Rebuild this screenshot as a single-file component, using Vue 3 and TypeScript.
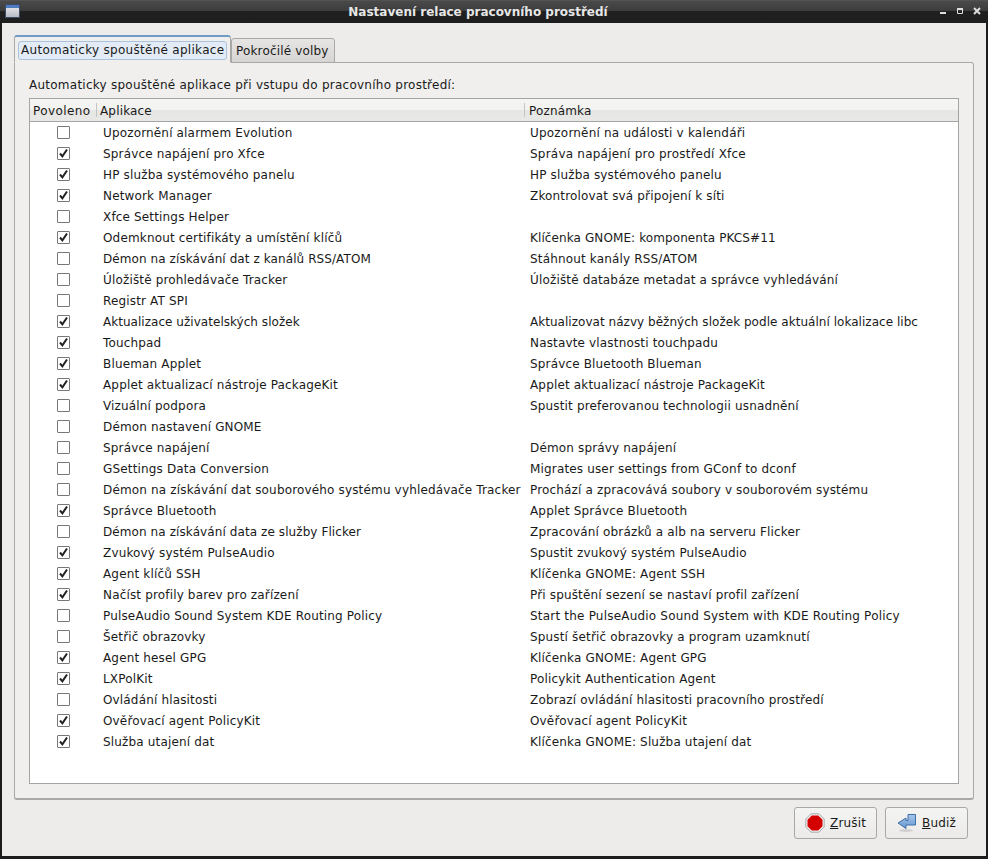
<script setup lang="ts">
interface Row { on: boolean; name: string; note: string; nameLs?: number; noteLs?: number }
const rows: Row[] = [
  { on: false, name: 'Upozornění alarmem Evolution', note: 'Upozornění na události v kalendáři', noteLs: 0.2 },
  { on: true, name: 'Správce napájení pro Xfce', note: 'Správa napájení pro prostředí Xfce', noteLs: 0.22 },
  { on: true, name: 'HP služba systémového panelu', note: 'HP služba systémového panelu' },
  { on: true, name: 'Network Manager', note: 'Zkontrolovat svá připojení k síti' },
  { on: false, name: 'Xfce Settings Helper', note: '' },
  { on: true, name: 'Odemknout certifikáty a umístění klíčů', note: 'Klíčenka GNOME: komponenta PKCS#11', noteLs: 0.1 },
  { on: false, name: 'Démon na získávání dat z kanálů RSS/ATOM', note: 'Stáhnout kanály RSS/ATOM', nameLs: 0.085 },
  { on: false, name: 'Úložiště prohledávače Tracker', note: 'Úložiště databáze metadat a správce vyhledávání' },
  { on: false, name: 'Registr AT SPI', note: '' },
  { on: true, name: 'Aktualizace uživatelských složek', note: 'Aktualizovat názvy běžných složek podle aktuální lokalizace libc', nameLs: 0.035, noteLs: 0.035 },
  { on: true, name: 'Touchpad', note: 'Nastavte vlastnosti touchpadu' },
  { on: true, name: 'Blueman Applet', note: 'Správce Bluetooth Blueman' },
  { on: true, name: 'Applet aktualizací nástroje PackageKit', note: 'Applet aktualizací nástroje PackageKit' },
  { on: false, name: 'Vizuální podpora', note: 'Spustit preferovanou technologii usnadnění' },
  { on: false, name: 'Démon nastavení GNOME', note: '' },
  { on: false, name: 'Správce napájení', note: 'Démon správy napájení' },
  { on: false, name: 'GSettings Data Conversion', note: 'Migrates user settings from GConf to dconf' },
  { on: false, name: 'Démon na získávání dat souborového systému vyhledávače Tracker', note: 'Prochází a zpracovává soubory v souborovém systému' },
  { on: true, name: 'Správce Bluetooth', note: 'Applet Správce Bluetooth' },
  { on: false, name: 'Démon na získávání data ze služby Flicker', note: 'Zpracování obrázků a alb na serveru Flicker', nameLs: 0.09 },
  { on: true, name: 'Zvukový systém PulseAudio', note: 'Spustit zvukový systém PulseAudio' },
  { on: true, name: 'Agent klíčů SSH', note: 'Klíčenka GNOME: Agent SSH' },
  { on: true, name: 'Načíst profily barev pro zařízení', note: 'Při spuštění sezení se nastaví profil zařízení' },
  { on: false, name: 'PulseAudio Sound System KDE Routing Policy', note: 'Start the PulseAudio Sound System with KDE Routing Policy', noteLs: 0.2 },
  { on: false, name: 'Šetřič obrazovky', note: 'Spustí šetřič obrazovky a program uzamknutí' },
  { on: true, name: 'Agent hesel GPG', note: 'Klíčenka GNOME: Agent GPG' },
  { on: true, name: 'LXPolKit', note: 'Policykit Authentication Agent' },
  { on: false, name: 'Ovládání hlasitosti', note: 'Zobrazí ovládání hlasitosti pracovního prostředí' },
  { on: true, name: 'Ověřovací agent PolicyKit', note: 'Ověřovací agent PolicyKit' },
  { on: true, name: 'Služba utajení dat', note: 'Klíčenka GNOME: Služba utajení dat' },
]
const ls = (v?: number) => (v === undefined ? undefined : { letterSpacing: `${v}px` })
</script>

<template>
  <div class="window">
    <header class="titlebar">
      <svg class="appicon" width="15" height="14" viewBox="0 0 15 14">
        <defs>
          <linearGradient id="ai" x1="0" y1="0" x2="0" y2="1">
            <stop offset="0" stop-color="#f0f0f2" />
            <stop offset="1" stop-color="#b4b8c4" />
          </linearGradient>
        </defs>
        <rect x="0.5" y="0.5" width="14" height="13" fill="url(#ai)" stroke="#3c4a66" />
        <rect x="1" y="1" width="13" height="3" fill="#4f7cc0" />
      </svg>
      <span class="title">Nastavení relace pracovního prostředí</span>
      <div class="winbtns">
        <svg width="8" height="8" viewBox="0 0 8 8"><rect x="1" y="5" width="6" height="2" fill="#ddd" /></svg>
        <svg width="8" height="8" viewBox="0 0 8 8"><path d="M1.5 1.5h5v5h-5z" fill="none" stroke="#ddd" /><rect x="1" y="1" width="6" height="2" fill="#ddd" /></svg>
        <svg width="8" height="8" viewBox="0 0 8 8"><path d="M1 1l6 6M7 1L1 7" stroke="#ddd" stroke-width="2" /></svg>
      </div>
    </header>

    <main class="body">
      <div class="tabs">
        <div class="tab active"><span class="focus">Automaticky spouštěné aplikace</span></div>
        <div class="tab">Pokročilé volby</div>
      </div>
      <section class="page">
        <p class="caption">Automaticky spouštěné aplikace při vstupu do pracovního prostředí:</p>
        <div class="list">
          <div class="head">
            <div class="hc c1 wide">Povoleno</div>
            <div class="hc c2">Aplikace</div>
            <div class="hc c3">Poznámka</div>
          </div>
          <div class="rows">
            <div v-for="r in rows" :key="r.name" class="row">
              <div class="c1 chk">
                <span class="box">
                  <svg v-if="r.on" width="11" height="11" viewBox="0 0 11 11"><path d="M2 5.5l2.4 2.8L9 1.5" fill="none" stroke="#222" stroke-width="2" /></svg>
                </span>
              </div>
              <div class="c2 cell name" :style="ls(r.nameLs)">{{ r.name }}</div>
              <div class="c3 cell note" :style="ls(r.noteLs)">{{ r.note }}</div>
            </div>
          </div>
        </div>
      </section>
      <footer class="actions">
        <button class="btn" type="button">
          <svg width="20" height="20" viewBox="0 0 20 20">
            <path d="M6 .8h8L19.2 6v8L14 19.2H6L.8 14V6z" fill="#eee" stroke="#aaa" />
            <path d="M6.8 2.5h6.4l4.3 4.3v6.4l-4.3 4.3H6.8l-4.3-4.3V6.8z" fill="#d40000" />
          </svg>
          <span><u>Z</u>rušit</span>
        </button>
        <button class="btn" type="button">
          <svg width="20" height="20" viewBox="0 0 20 20">
            <defs>
              <linearGradient id="ar" x1="0" y1="0" x2="0" y2="1">
                <stop offset="0" stop-color="#a9c8ea" />
                <stop offset="1" stop-color="#6496cf" />
              </linearGradient>
            </defs>
            <ellipse cx="9" cy="17.5" rx="7" ry="1.5" fill="#cfcfcf" />
            <path d="M11 1.5h7.5v10.5H9v3.5L1 10 9 5v2.5h2z" fill="url(#ar)" stroke="#3f6fa8" stroke-linejoin="round" />
          </svg>
          <span><u>B</u>udiž</span>
        </button>
      </footer>
    </main>
  </div>
</template>

<style>
html, body { margin: 0; background: #1a1a1a; }
</style>

<style scoped>
.window {
  width: 988px;
  height: 859px;
  box-sizing: border-box;
  display: flex;
  flex-direction: column;
  background: #1c1c1c;
  padding: 0 2px 3px;
  font-family: "DejaVu Sans", sans-serif;
  font-size: 12px;
  letter-spacing: 0.16px;
  color: #1a1a1a;
  overflow: hidden;
}
.titlebar {
  position: relative;
  height: 23px;
  margin: 0 -2px;
  flex: none;
  display: flex;
  align-items: center;
  justify-content: center;
  padding-right: 32px;
  box-sizing: border-box;
  background: linear-gradient(#5a5a5a 0, #4a4a4a 1px, #3c3c3c 11px, #202020 11px, #1e1e1e 100%);
}
.appicon { position: absolute; left: 5px; top: 4px; }
.title { font-weight: 700; color: #e6e6e6; font-size: 12px; letter-spacing: 0; }
.winbtns { position: absolute; right: 7px; top: 7px; display: flex; gap: 9px; }
.body {
  flex: 1;
  display: flex;
  flex-direction: column;
  background: #edecea;
  padding: 12px 12px 0;
  min-height: 0;
}
.tabs { display: flex; align-items: flex-end; height: 28px; position: relative; z-index: 1; margin-bottom: -1px; }
.tab {
  box-sizing: border-box;
  height: 25px;
  padding: 0 4px;
  line-height: 25px;
  background: linear-gradient(#e6e5e3, #d6d5d3);
  border: 1px solid #a8a8a6;
  border-radius: 3px 3px 0 0;
  width: 104px;
  white-space: nowrap;
}
.tab.active {
  width: 217px;
  height: 28px;
  padding: 4px 3px 0 3px;
  background: #f0efed;
  border-color: #a8a8a6 #a8a8a6 #f0efed;
  border-top: 2px solid #6f9bc9;
  letter-spacing: 0.29px;
}
.focus {
  display: block;
  box-sizing: border-box;
  height: 19px;
  line-height: 17px;
  padding: 0 2px;
  background: #e3ecf6;
  border: 1px solid #a9c3de;
  border-radius: 3px;
}
.page {
  box-sizing: border-box;
  width: 960px;
  height: 738px;
  flex: none;
  background: #f0efed;
  border: 1px solid #a8a8a6;
  border-bottom-width: 2px;
  border-radius: 0 3px 3px 3px;
  padding: 14px 14px 0;
}
.caption { margin: 0; height: 21px; line-height: 17px; white-space: nowrap; letter-spacing: 0.25px; }
.list {
  box-sizing: border-box;
  width: 930px;
  height: 686px;
  background: #fff;
  border: 1px solid #a4a4a2;
}
.head {
  display: flex;
  height: 23px;
  box-sizing: border-box;
  background: linear-gradient(#f5f5f3 0, #f2f2f0 50%, #e6e6e4 50%, #e8e8e6 100%);
  border-bottom: 1px solid #a4a4a2;
  line-height: 23px;
}
.hc { box-sizing: border-box; padding: 1px 0 0 3px; position: relative; white-space: nowrap; }
.hc.wide { letter-spacing: 0.4px; }
.hc.c1::after, .hc.c2::after {
  content: "";
  position: absolute;
  right: 0;
  top: 4px;
  bottom: 4px;
  width: 1px;
  background: #c4c4c2;
}
.hc.c2::after { right: 1px; }
.c1 { width: 67px; flex: none; }
.c2 { width: 429px; flex: none; }
.c3 { flex: 1; }
.rows { display: flex; flex-direction: column; }
.row { display: flex; height: 21px; line-height: 21px; }
.cell { white-space: nowrap; box-sizing: border-box; padding-top: 1px; }
.name { padding-left: 6px; }
.note { padding-left: 4px; }
.chk { display: flex; justify-content: center; align-items: center; padding-bottom: 1px; box-sizing: border-box; }
.box {
  box-sizing: border-box;
  width: 13px;
  height: 13px;
  background: #fff;
  border: 1px solid #777;
  border-radius: 1px;
  display: flex;
}
.box svg { display: block; margin: 0; }
.actions {
  display: flex;
  justify-content: flex-end;
  gap: 8px;
  padding: 7px 6px 0 0;
}
.btn {
  box-sizing: border-box;
  width: 83px;
  height: 32px;
  background: linear-gradient(#f4f4f2, #ebeae8);
  border: 1px solid #a8a8a6;
  border-radius: 3px;
  font: inherit;
  letter-spacing: inherit;
  color: inherit;
  display: flex;
  align-items: center;
  justify-content: center;
  gap: 5px;
  padding: 0;
}
</style>
